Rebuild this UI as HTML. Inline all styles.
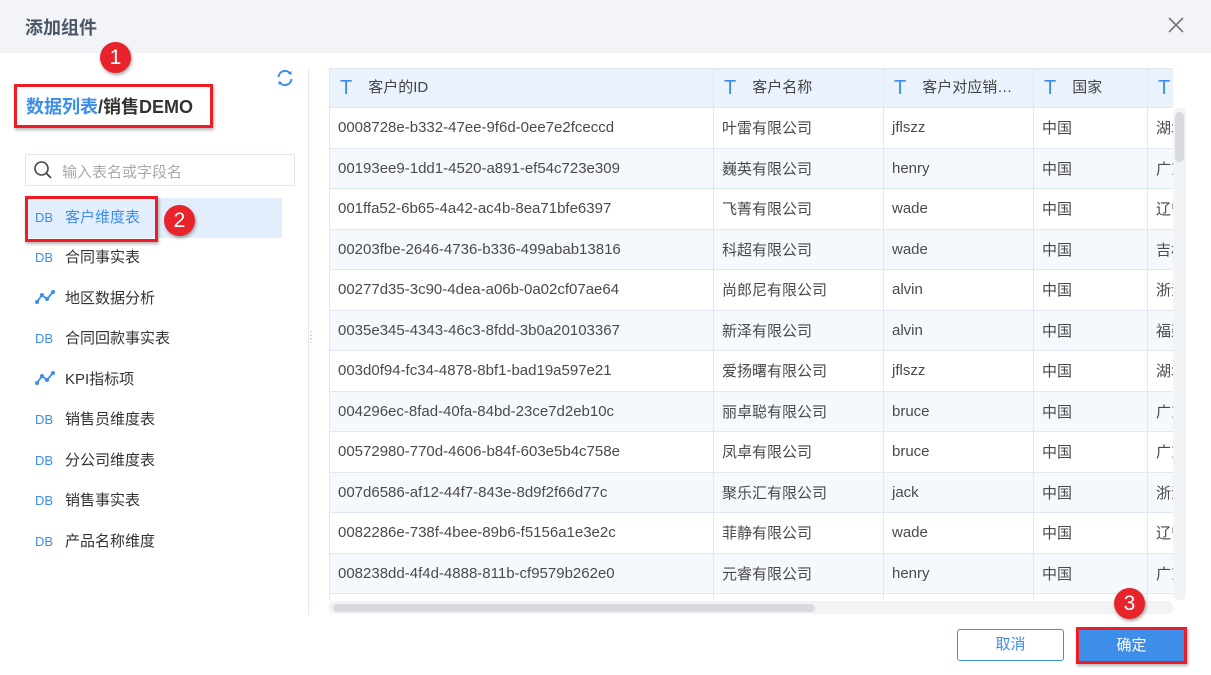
<!DOCTYPE html><html><head><meta charset="utf-8"><style>
*{margin:0;padding:0;box-sizing:border-box}
body{width:1211px;height:675px;background:#fff;font-family:"Liberation Sans","Noto Sans CJK SC",sans-serif;position:relative;overflow:hidden;color:#333}
.a{position:absolute}
.hdr{left:0;top:0;width:1211px;height:53px;background:#f2f4f8}
.title{left:25px;top:14px;font-size:18px;font-weight:bold;color:#4b5563}
.badge{width:31px;height:31px;border-radius:50%;background:#e8232b;color:#fff;font-size:21px;text-align:center;line-height:31px;box-shadow:1px 2px 3px rgba(0,0,0,.35)}
.rb{border:3px solid #ee1c25;box-shadow:1px 2px 3px rgba(0,0,0,.3)}
.item{left:25px;width:257px;height:40px;font-size:15px;line-height:40px;color:#333}
.item i{font-style:normal;display:inline-block;width:22px;margin-left:10px;margin-right:8px;color:#3d8ee8;font-size:13px;letter-spacing:0}
table{border-collapse:collapse;font-size:15px;color:#4a4a4a}
td{border:1px solid #dfe8f3;height:40.5px;padding:0 8px;white-space:nowrap;overflow:hidden}
tr.h td{background:#eaf2fd;height:39px;color:#444;padding-left:10px}
tr.h td b{color:#3d8ee8;font-weight:normal;font-size:20px;margin-right:16px;vertical-align:-2px}
tr:nth-child(odd):not(.h) td{background:#f5f9fe}
</style></head><body>
<div class="a hdr"></div>
<div class="a title">添加组件</div>
<div class="a" style="left:1166px;top:15px;width:20px;height:20px">
<svg width="20" height="20"><path d="M3 3L17 17M17 3L3 17" stroke="#777" stroke-width="1.6"/></svg></div>
<div class="a badge" style="left:100px;top:42px">1</div>
<div class="a rb" style="left:14px;top:84px;width:199px;height:44px"></div>
<div class="a" style="left:26px;top:93px;font-size:18px;font-weight:bold;color:#333"><span style="color:#3d8ee8">数据列表</span>/销售DEMO</div>
<div class="a" style="left:275px;top:68px"><svg width="20" height="20" viewBox="0 0 20 20"><path d="M3.5 9A6.5 6.5 0 0 1 15.5 6M16.5 11A6.5 6.5 0 0 1 4.5 14" fill="none" stroke="#3d8ee8" stroke-width="2"/><path d="M13 5.5L16.5 7L16.5 3Z M7 14.5L3.5 13L3.5 17Z" fill="#3d8ee8"/></svg></div>
<div class="a" style="left:25px;top:154px;width:270px;height:32px;border:1px solid #e1e4e8;border-radius:2px"></div>
<div class="a" style="left:33px;top:160px"><svg width="20" height="20"><circle cx="8.5" cy="8.5" r="6.5" fill="none" stroke="#444" stroke-width="1.6"/><path d="M13.5 13.5L18 18" stroke="#444" stroke-width="1.8"/></svg></div>
<div class="a" style="left:62px;top:161px;font-size:15px;color:#aaa">输入表名或字段名</div>
<div class="a item" style="top:198px;background:#e3eefc;color:#3d8ee8"><i>DB</i>客户维度表</div>
<div class="a rb" style="left:25px;top:196px;width:133px;height:46px"></div>
<div class="a badge" style="left:164px;top:205px">2</div>
<div class="a item" style="top:238px"><i>DB</i>合同事实表</div>
<div class="a item" style="top:279px"><i><svg width="20" height="14" style="vertical-align:-1px"><path d="M2 12L7 5L12 9L18 2" fill="none" stroke="#3d8ee8" stroke-width="1.8"/><circle cx="2" cy="12" r="2" fill="#3d8ee8"/><circle cx="7" cy="5" r="2" fill="#3d8ee8"/><circle cx="12" cy="9" r="2" fill="#3d8ee8"/><circle cx="18" cy="2" r="2" fill="#3d8ee8"/></svg></i>地区数据分析</div>
<div class="a item" style="top:319px"><i>DB</i>合同回款事实表</div>
<div class="a item" style="top:360px"><i><svg width="20" height="14" style="vertical-align:-1px"><path d="M2 12L7 5L12 9L18 2" fill="none" stroke="#3d8ee8" stroke-width="1.8"/><circle cx="2" cy="12" r="2" fill="#3d8ee8"/><circle cx="7" cy="5" r="2" fill="#3d8ee8"/><circle cx="12" cy="9" r="2" fill="#3d8ee8"/><circle cx="18" cy="2" r="2" fill="#3d8ee8"/></svg></i>KPI指标项</div>
<div class="a item" style="top:400px"><i>DB</i>销售员维度表</div>
<div class="a item" style="top:441px"><i>DB</i>分公司维度表</div>
<div class="a item" style="top:481px"><i>DB</i>销售事实表</div>
<div class="a item" style="top:522px"><i>DB</i>产品名称维度</div>
<div class="a" style="left:308px;top:68px;width:1px;height:547px;background:#e4e7ec"></div>
<div class="a" style="left:306px;top:334px;color:#aaa;font-size:10px;line-height:4px;width:6px">⋮<br>⋮</div>
<div class="a" style="left:329px;top:68px;width:844px;height:532px;overflow:hidden">
<table style="width:900px;table-layout:fixed">
<colgroup><col style="width:384px"><col style="width:170px"><col style="width:150px"><col style="width:114px"><col style="width:82px"></colgroup>
<tr class="h"><td><b>T</b>客户的ID</td><td><b>T</b>客户名称</td><td><b>T</b>客户对应销…</td><td><b>T</b>国家</td><td><b>T</b></td></tr>
<tr><td>0008728e-b332-47ee-9f6d-0ee7e2fceccd</td><td>叶雷有限公司</td><td>jflszz</td><td>中国</td><td>湖北</td></tr>
<tr><td>00193ee9-1dd1-4520-a891-ef54c723e309</td><td>巍英有限公司</td><td>henry</td><td>中国</td><td>广东</td></tr>
<tr><td>001ffa52-6b65-4a42-ac4b-8ea71bfe6397</td><td>飞菁有限公司</td><td>wade</td><td>中国</td><td>辽宁</td></tr>
<tr><td>00203fbe-2646-4736-b336-499abab13816</td><td>科超有限公司</td><td>wade</td><td>中国</td><td>吉林</td></tr>
<tr><td>00277d35-3c90-4dea-a06b-0a02cf07ae64</td><td>尚郎尼有限公司</td><td>alvin</td><td>中国</td><td>浙江</td></tr>
<tr><td>0035e345-4343-46c3-8fdd-3b0a20103367</td><td>新泽有限公司</td><td>alvin</td><td>中国</td><td>福建</td></tr>
<tr><td>003d0f94-fc34-4878-8bf1-bad19a597e21</td><td>爱扬曙有限公司</td><td>jflszz</td><td>中国</td><td>湖北</td></tr>
<tr><td>004296ec-8fad-40fa-84bd-23ce7d2eb10c</td><td>丽卓聪有限公司</td><td>bruce</td><td>中国</td><td>广东</td></tr>
<tr><td>00572980-770d-4606-b84f-603e5b4c758e</td><td>凤卓有限公司</td><td>bruce</td><td>中国</td><td>广东</td></tr>
<tr><td>007d6586-af12-44f7-843e-8d9f2f66d77c</td><td>聚乐汇有限公司</td><td>jack</td><td>中国</td><td>浙江</td></tr>
<tr><td>0082286e-738f-4bee-89b6-f5156a1e3e2c</td><td>菲静有限公司</td><td>wade</td><td>中国</td><td>辽宁</td></tr>
<tr><td>008238dd-4f4d-4888-811b-cf9579b262e0</td><td>元睿有限公司</td><td>henry</td><td>中国</td><td>广东</td></tr>
<tr><td></td><td></td><td></td><td></td><td></td></tr>
</table></div>
<div class="a" style="left:1173px;top:108px;width:13px;height:492px;background:#f2f3f5;border-radius:5px"></div>
<div class="a" style="left:1175px;top:112px;width:9px;height:50px;background:#d8dadf;border-radius:5px"></div>
<div class="a" style="left:329px;top:601px;width:844px;height:13px;background:#f2f3f5;border-radius:5px"></div>
<div class="a" style="left:333px;top:604px;width:482px;height:8px;background:#d8dadf;border-radius:4px"></div>
<div class="a" style="left:957px;top:629px;width:107px;height:32px;border:1px solid #3d8ee8;border-radius:3px;color:#3d8ee8;font-size:15px;text-align:center;line-height:30px">取消</div>
<div class="a" style="left:1076px;top:627px;width:111px;height:37px;background:#3d8ee8;border:3px solid #ee1c25;box-shadow:1px 2px 3px rgba(0,0,0,.3);color:#fff;font-size:15px;text-align:center;line-height:31px">确定</div>
<div class="a badge" style="left:1114px;top:588px">3</div>
</body></html>
